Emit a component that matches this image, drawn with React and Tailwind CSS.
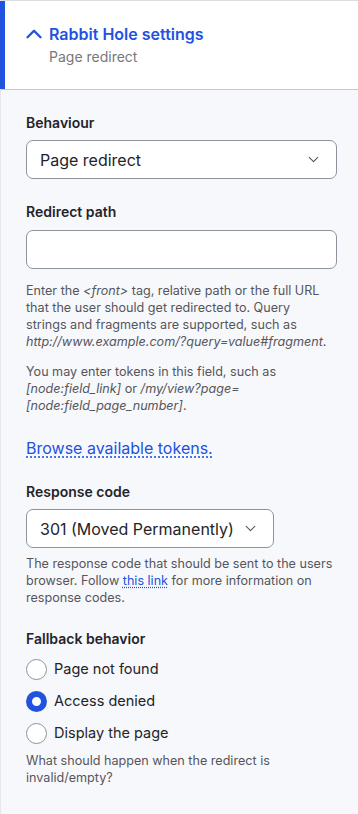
import { ChevronUp, ChevronDown } from "lucide-react";

function Radio({ label, checked }) {
  return (
    <label className="flex items-center gap-[7px] h-[32px]">
      {checked ? (
        <span className="w-[21px] h-[21px] rounded-full border-[6px] border-[#2152e0] bg-white" />
      ) : (
        <span className="w-[21px] h-[21px] rounded-full border border-[#8e929c] bg-white" />
      )}
      <span className="text-[14.5px] text-[#232429]">{label}</span>
    </label>
  );
}

function Select({ value, className }) {
  return (
    <div
      className={
        "h-[39px] flex items-center justify-between pl-[13px] pr-[14px] bg-white border border-[#8e929c] rounded-[7px] " +
        className
      }
    >
      <span className="text-[16px] text-[#232429] whitespace-nowrap">{value}</span>
      <ChevronDown size={17} strokeWidth={1.6} className="text-[#545560] shrink-0" />
    </div>
  );
}

export default function App() {
  return (
    <div
      className="w-[358px] min-h-[814px] bg-[#f7f8fc] border-l border-[#e6e7ec]"
      style={{ fontFamily: "Inter, 'Noto Sans', sans-serif" }}
    >
      <div className="relative bg-white border-t border-[#dcdde2] border-b border-b-[#c8c9ce] h-[90px] pl-[20px] pt-[20px]">
        <div className="absolute left-[-1px] top-0 bottom-0 w-[5px] bg-[#2152e0]" />
        <div className="flex items-center gap-[2px]">
          <ChevronUp size={26} strokeWidth={2.2} className="text-[#2152e0]" />
          <span className="text-[16px] font-semibold text-[#2152e0]">Rabbit Hole settings</span>
        </div>
        <div className="pl-[28px] -mt-[1px] text-[14px] text-[#76777c]">Page redirect</div>
      </div>

      <div className="pl-[25px] pr-[22px] pt-[22px] text-[#232429]">
        <div className="text-[14px] font-semibold leading-[22px]">Behaviour</div>
        <Select value="Page redirect" className="mt-[6px] w-[311px]" />

        <div className="text-[14px] font-semibold leading-[22px] mt-[22px]">Redirect path</div>
        <div className="mt-[7px] w-[311px] h-[39px] bg-white border border-[#8e929c] rounded-[7px]" />

        <p className="mt-[13px] text-[12.6px] leading-[17px] text-[#55565b] pr-[2px]">
          Enter the <em>&lt;front&gt;</em> tag, relative path or the full URL that the user should get redirected to. Query strings and fragments are supported, such as <em>http://www.example.com/?query=value#fragment</em>.
        </p>
        <p className="mt-[13px] text-[12.6px] leading-[17px] text-[#55565b]">
          You may enter tokens in this field, such as <em>[node:field_link]</em> or <em>/my/view?page=</em>
          <br />
          <em>[node:field_page_number]</em>.
        </p>

        <a className="block mt-[23px] text-[16px] leading-[22px] text-[#2152e0] underline decoration-dotted underline-offset-[3px]">
          Browse available tokens.
        </a>

        <div className="text-[14px] font-semibold leading-[22px] mt-[22px]">Response code</div>
        <Select value="301 (Moved Permanently)" className="mt-[6px] w-[248px]" />
        <p className="mt-[7px] text-[12.6px] leading-[17px] text-[#55565b]">
          The response code that should be sent to the users browser. Follow{" "}
          <a className="text-[#2152e0] underline decoration-dotted underline-offset-[2px]">this link</a> for more information on response codes.
        </p>

        <div className="text-[14px] font-semibold leading-[22px] mt-[22px]">Fallback behavior</div>
        <div className="mt-[3px] flex flex-col">
          <Radio label="Page not found" />
          <Radio label="Access denied" checked />
          <Radio label="Display the page" />
        </div>
        <p className="mt-[3px] text-[12.6px] leading-[17px] text-[#55565b]">
          What should happen when the redirect is invalid/empty?
        </p>
      </div>
    </div>
  );
}
